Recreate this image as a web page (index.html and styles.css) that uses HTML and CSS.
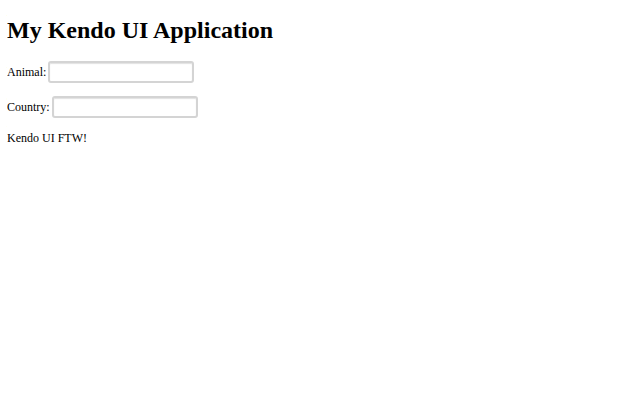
FILE: index.html
```html
<!DOCTYPE html>
<html>
<head>
<meta charset="utf-8">
<title>My Kendo UI Application</title>
<link rel="stylesheet" href="styles.css">
</head>
<body>
<h1 class="title">My Kendo UI Application</h1>
<div class="field"><label class="label">Animal:</label> <input class="box" type="text"></div>
<div class="field"><label class="label">Country:</label> <input class="box" type="text"></div>
<p class="note">Kendo UI FTW!</p>
</body>
</html>
```
FILE: styles.css
```css
html, body {
  background: #fff;
}
body {
  margin: 8px 7px;
  font-family: "Liberation Serif", "Times New Roman", serif;
  font-size: 12px;
  color: #000;
}
.title {
  font-size: 24px;
  font-weight: bold;
  margin: 8px 0 17px;
  line-height: 28px;
}
.field {
  margin: 0 0 13px;
  display: flex;
  align-items: center;
  gap: 2px;
}
.label {
  font-size: 12px;
}
.box {
  box-sizing: border-box;
  width: 146px;
  height: 22px;
  margin: 0;
  border: 2px solid #d4d4d4;
  border-radius: 3px;
  box-shadow: inset 0 1px 1px rgba(0,0,0,0.12);
  background: #fff;
  padding: 1px 3px;
  font-family: "Liberation Serif", serif;
  font-size: 12px;
}
.note {
  margin: 12px 0 0;
  line-height: 14px;
}
```
